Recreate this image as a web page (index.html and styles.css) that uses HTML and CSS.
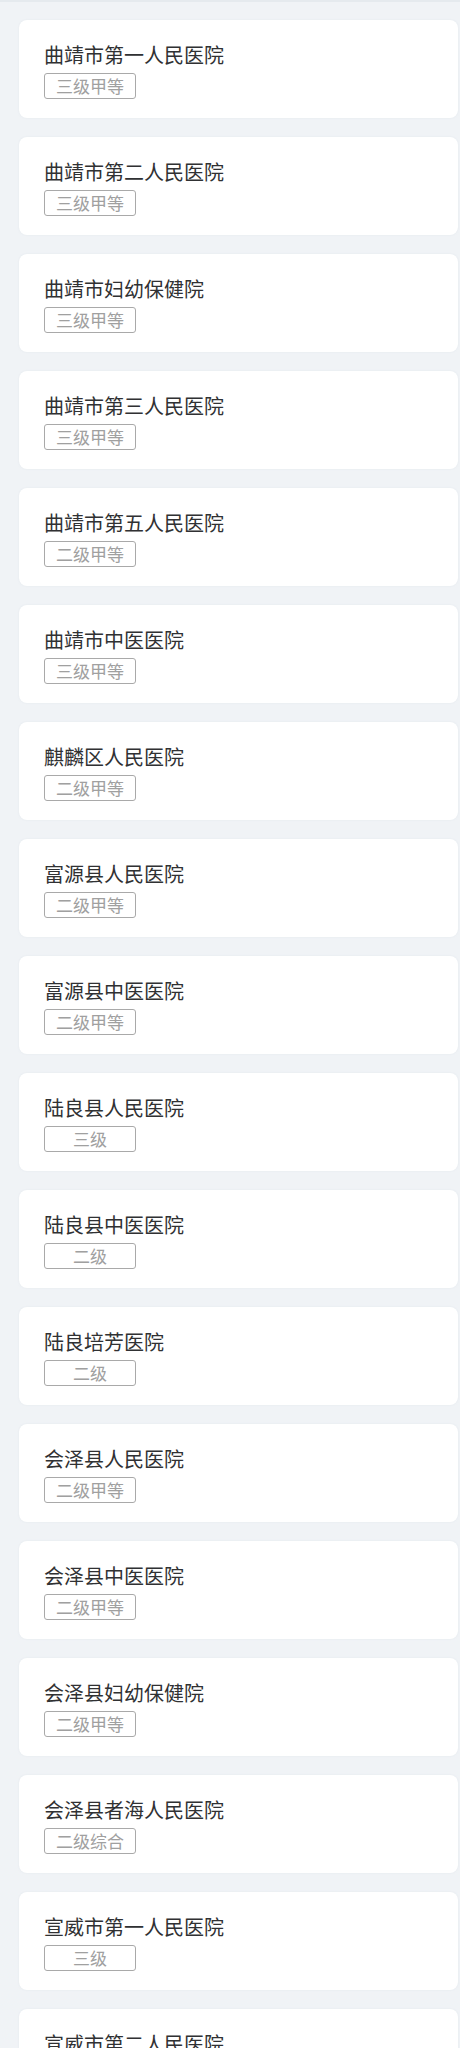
FILE: index.html
```html
<!DOCTYPE html>
<html lang="zh-CN">
<head>
<meta charset="utf-8">
<title>医院列表</title>
<link rel="stylesheet" href="styles.css">
</head>
<body>
<div class="topline"></div>
<ul class="list">
  <li class="card"><div class="name">曲靖市第一人民医院</div><span class="tag">三级甲等</span></li>
  <li class="card"><div class="name">曲靖市第二人民医院</div><span class="tag">三级甲等</span></li>
  <li class="card"><div class="name">曲靖市妇幼保健院</div><span class="tag">三级甲等</span></li>
  <li class="card"><div class="name">曲靖市第三人民医院</div><span class="tag">三级甲等</span></li>
  <li class="card"><div class="name">曲靖市第五人民医院</div><span class="tag">二级甲等</span></li>
  <li class="card"><div class="name">曲靖市中医医院</div><span class="tag">三级甲等</span></li>
  <li class="card"><div class="name">麒麟区人民医院</div><span class="tag">二级甲等</span></li>
  <li class="card"><div class="name">富源县人民医院</div><span class="tag">二级甲等</span></li>
  <li class="card"><div class="name">富源县中医医院</div><span class="tag">二级甲等</span></li>
  <li class="card"><div class="name">陆良县人民医院</div><span class="tag">三级</span></li>
  <li class="card"><div class="name">陆良县中医医院</div><span class="tag">二级</span></li>
  <li class="card"><div class="name">陆良培芳医院</div><span class="tag">二级</span></li>
  <li class="card"><div class="name">会泽县人民医院</div><span class="tag">二级甲等</span></li>
  <li class="card"><div class="name">会泽县中医医院</div><span class="tag">二级甲等</span></li>
  <li class="card"><div class="name">会泽县妇幼保健院</div><span class="tag">二级甲等</span></li>
  <li class="card"><div class="name">会泽县者海人民医院</div><span class="tag">二级综合</span></li>
  <li class="card"><div class="name">宣威市第一人民医院</div><span class="tag">三级</span></li>
  <li class="card"><div class="name">宣威市第二人民医院</div><span class="tag">三级</span></li>
</ul>
</body>
</html>
```
FILE: styles.css
```css
html, body {
  margin: 0;
  padding: 0;
  background: #f0f3f6;
  font-family: "Noto Sans CJK SC", "Noto Sans", sans-serif;
}
.topline {
  height: 2px;
  background: #e5eaee;
}
.list {
  list-style: none;
  margin: 0;
  padding: 18px 0 0 0;
}
.card {
  box-sizing: border-box;
  width: 439px;
  height: 98px;
  margin: 0 0 19px 19px;
  padding: 21px 0 0 25px;
  background: #ffffff;
  border-radius: 8px;
  box-shadow: 0 0 2px rgba(200, 210, 220, 0.35);
}
.name {
  font-size: 20px;
  line-height: 28px;
  color: #303133;
  white-space: nowrap;
}
.tag {
  display: block;
  box-sizing: border-box;
  width: 92px;
  height: 26px;
  margin-top: 4px;
  border: 1px solid #a9a9a9;
  border-radius: 3px;
  font-size: 17px;
  line-height: 24px;
  color: #a0a0a0;
  text-align: center;
}
```
